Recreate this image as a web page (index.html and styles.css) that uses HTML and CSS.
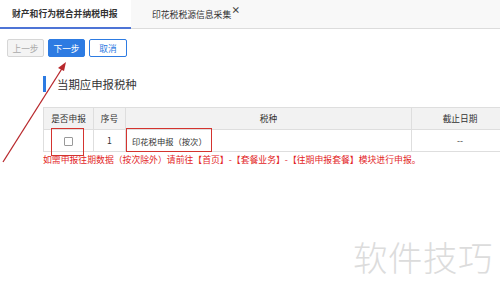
FILE: index.html
```html
<!DOCTYPE html>
<html lang="zh-CN">
<head>
  <meta charset="UTF-8" />
  <title>财产和行为税合并纳税申报</title>
  <link rel="stylesheet" href="styles.css">
</head>
<body>
  <div class="tabs">
    <div class="tab active">财产和行为税合并纳税申报</div>
    <div class="tab">印花税税源信息采集<span class="close">×</span></div>
  </div>

  <div class="toolbar">
    <button class="btn btn-disabled">上一步</button>
    <button class="btn btn-primary">下一步</button>
    <button class="btn btn-plain">取消</button>
  </div>

  <div class="section">
    <div class="section-title">当期应申报税种</div>
    <table class="tax-table">
      <thead>
        <tr>
          <th class="col-check">是否申报</th>
          <th class="col-no">序号</th>
          <th class="col-name">税种</th>
          <th class="col-date">截止日期</th>
        </tr>
      </thead>
      <tbody>
        <tr>
          <td><span class="checkbox"></span></td>
          <td>1</td>
          <td class="name">印花税申报（按次）</td>
          <td>--</td>
        </tr>
      </tbody>
    </table>
    <p class="note">如需申报往期数据（按次除外）请前往【首页】-【套餐业务】-【往期申报套餐】模块进行申报。</p>
  </div>

  <div class="watermark">软件技巧</div>

  <!-- annotations drawn on top of the screenshot -->
  <div class="mark mark-check"></div>
  <div class="mark mark-name"></div>
  <svg class="arrow" width="500" height="293" viewBox="0 0 500 293">
    <line x1="3" y1="162" x2="63" y2="67" stroke="#b8282c" stroke-width="1.3" />
    <polygon points="66,62 58,68 64,71" fill="#b8282c" />
  </svg>
</body>
</html>
```

FILE: styles.css
```css
body {
  margin: 0;
  padding: 0;
  width: 500px;
  height: 293px;
  overflow: hidden;
  background: #fff;
  font-family: "Noto Sans CJK SC", "Noto Sans", sans-serif;
  color: #333;
  position: relative;
}

.tabs {
  display: flex;
  height: 28px;
  background: #f8f8f8;
  border-bottom: 1px solid #dcdcdc;
}

.tab {
  position: relative;
  display: flex;
  align-items: center;
  font-size: 8.8px;
  color: #333;
  padding: 0 12px;
}

.tab.active {
  width: 107px;
  font-weight: bold;
  background: #fff;
  border-bottom: 2px solid #4d74d6;
  margin-bottom: -1px;
}

.tab + .tab {
  padding-left: 21px;
}

.close {
  position: absolute;
  right: 3px;
  top: 3px;
  font-size: 9px;
  font-weight: bold;
  color: #444;
}

.toolbar {
  display: flex;
  gap: 4px;
  padding: 10px 7px 0;
}

.btn {
  width: 37px;
  height: 18px;
  padding: 0;
  font-family: inherit;
  font-size: 8.7px;
  border-radius: 2px;
  border: 1px solid #d6d6d6;
}

.btn-disabled {
  background: #f4f4f4;
  color: #aaa;
}

.btn-primary {
  background: #2d7be2;
  border-color: #2d7be2;
  color: #fff;
}

.btn-plain {
  width: 38px;
  background: #fff;
  border-color: #2d7be2;
  color: #2d7be2;
}

.section {
  padding: 19px 0 0 43px;
}

.section-title {
  height: 16px;
  border-left: 3px solid #2d7be2;
  padding-left: 11px;
  font-size: 11.4px;
  line-height: 16px;
  color: #333;
}

.tax-table {
  margin-top: 15px;
  border-collapse: collapse;
  width: 466px;
  font-size: 8.7px;
  color: #333;
}

.tax-table th,
.tax-table td {
  border: 1px solid #dedede;
  height: 21px;
  padding: 0;
  text-align: center;
  font-weight: normal;
}

.tax-table th {
  background: #f2f2f2;
}

.col-check { width: 49px; }
.col-no { width: 31px; }
.col-name { width: 285px; }

.tax-table td.name {
  text-align: left;
  padding-left: 6px;
  font-size: 8.3px;
}

.checkbox {
  display: inline-block;
  width: 7px;
  height: 7px;
  border: 1px solid #999;
  border-radius: 1px;
  vertical-align: middle;
}

.note {
  margin: 1px 0 0;
  font-size: 8.85px;
  color: #e3261f;
  white-space: nowrap;
}

.watermark {
  position: absolute;
  left: 353px;
  top: 231px;
  font-size: 34.5px;
  color: #dcdcdc;
  letter-spacing: 0.5px;
  font-weight: 300;
}

.mark {
  position: absolute;
  border: 1.3px solid #d4342f;
}

.mark-check {
  left: 51px;
  top: 128px;
  width: 31px;
  height: 26px;
}

.mark-name {
  left: 126px;
  top: 128px;
  width: 84px;
  height: 22px;
}

.arrow {
  position: absolute;
  left: 0;
  top: 0;
  pointer-events: none;
}
```
